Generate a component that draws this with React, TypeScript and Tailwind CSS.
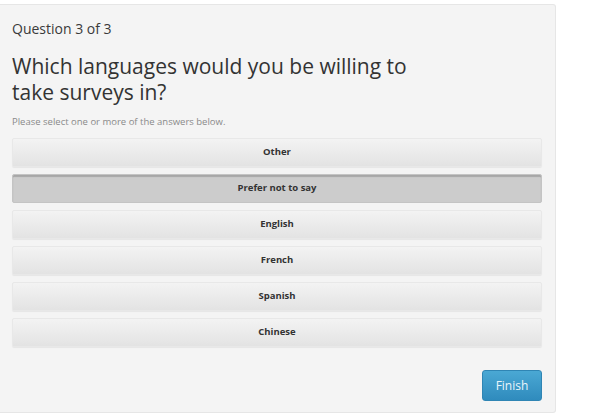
import { useState } from "react";

const ANSWERS = ["Other", "Prefer not to say", "English", "French", "Spanish", "Chinese"];

export default function App() {
  const [picked, setPicked] = useState<string[]>(["Prefer not to say"]);

  const toggle = (a: string) =>
    setPicked((p) => (p.includes(a) ? p.filter((x) => x !== a) : [...p, a]));

  return (
    <div className="w-[598px] h-[418px] bg-white pt-[4px] font-['Open_Sans',sans-serif]">
      <div className="w-[556px] h-[409px] bg-[#f4f4f4] border border-l-0 border-[#e6e6e6] rounded-tr-[3px] rounded-br-[3px] pl-[12px] pr-[13px] pt-[14px] flex flex-col">
        <div className="text-[14px] leading-[20px] text-[#3a3a3a]">Question 3 of 3</div>
        <h1 className="mt-[14px] max-w-[420px] text-[21px] leading-[26px] text-[#333]">
          Which languages would you be willing to take surveys in?
        </h1>
        <p className="mt-[10px] text-[9.5px] leading-[13px] text-[#8a8a8a]">
          Please select one or more of the answers below.
        </p>
        <div className="mt-[10px] flex flex-col gap-[7px]">
          {ANSWERS.map((a) => {
            const on = picked.includes(a);
            return (
              <button
                key={a}
                type="button"
                onClick={() => toggle(a)}
                className={`h-[29px] w-full rounded-[2px] text-[9.5px] font-bold text-[#333] ${
                  on
                    ? "bg-[#cccccc] border border-[#c4c4c4] shadow-[inset_0_2px_1px_rgba(0,0,0,0.18)]"
                    : "bg-gradient-to-b from-[#f3f3f3] to-[#e3e3e3] border border-[#e8e8e8] shadow-[0_1px_1px_rgba(0,0,0,0.06)]"
                }`}
              >
                {a}
              </button>
            );
          })}
        </div>
        <div className="mt-[23px] flex justify-end">
          <button
            type="button"
            className="w-[60px] h-[31px] rounded-[3px] bg-gradient-to-b from-[#4aa8d4] to-[#2f8bbd] border border-[#2f85b4] text-[12px] text-[#eaf5fb]"
          >
            Finish
          </button>
        </div>
      </div>
    </div>
  );
}
